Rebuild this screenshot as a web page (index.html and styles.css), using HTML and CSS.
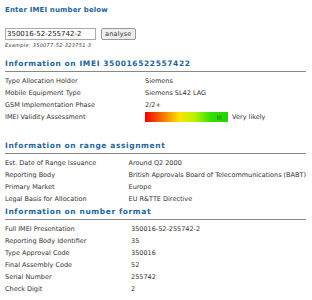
FILE: index.html
```html
<!DOCTYPE html>
<html lang="en">
  <head>
    <meta charset="UTF-8" />
    <title>IMEI</title>
    <link rel="stylesheet" href="styles.css">
  </head>
  <body>
    <form class="lookup">
      <h2 class="heading first">Enter IMEI number below</h2>
      <div class="lookup-row">
        <input type="text" class="lookup-input" value="350016-52-255742-2" />
        <button type="submit" class="lookup-btn">analyse</button>
      </div>
      <p class="example">Example: 350077-52-323751-3</p>
    </form>

    <h2 class="heading ruled">Information on IMEI 350016522557422</h2>
    <table class="info">
      <tr><td class="key">Type Allocation Holder</td><td>Siemens</td></tr>
      <tr><td class="key">Mobile Equipment Type</td><td>Siemens SL42 LAG</td></tr>
      <tr><td class="key">GSM Implementation Phase</td><td>2/2+</td></tr>
      <tr>
        <td class="key">IMEI Validity Assessment</td>
        <td>
          <span class="meter"><span class="meter-mark">)|(</span></span>
          <span class="meter-label">Very likely</span>
        </td>
      </tr>
      <tr><td class="key"></td><td></td></tr>
    </table>

    <h2 class="heading ruled">Information on range assignment</h2>
    <table class="info wide">
      <tr><td class="key">Est. Date of Range Issuance</td><td>Around Q2 2000</td></tr>
      <tr><td class="key">Reporting Body</td><td>British Approvals Board of Telecommunications (BABT)</td></tr>
      <tr><td class="key">Primary Market</td><td>Europe</td></tr>
      <tr><td class="key">Legal Basis for Allocation</td><td>EU R&amp;TTE Directive</td></tr>
    </table>

    <h2 class="heading ruled tight">Information on number format</h2>
    <table class="info wide">
      <tr><td class="key">Full IMEI Presentation</td><td>350016-52-255742-2</td></tr>
      <tr><td class="key">Reporting Body Identifier</td><td>35</td></tr>
      <tr><td class="key">Type Approval Code</td><td>350016</td></tr>
      <tr><td class="key">Final Assembly Code</td><td>52</td></tr>
      <tr><td class="key">Serial Number</td><td>255742</td></tr>
      <tr><td class="key">Check Digit</td><td>2</td></tr>
    </table>
  </body>
</html>
```
FILE: styles.css
```css
* {
  box-sizing: border-box;
}

body {
  margin: 0;
  padding: 0 6px 0 5px;
  background: #fff;
  color: #333;
  font-family: "DejaVu Sans", Verdana, sans-serif;
  font-size: 6.5px;
}

.lookup {
  height: 53px;
}

.heading {
  margin: 0;
  color: #22649a;
  font-size: 7.5px;
  font-weight: bold;
  letter-spacing: 0.6px;
  line-height: 10px;
}

.heading.first {
  padding-top: 5px;
  font-size: 7px;
  letter-spacing: 0.15px;
}

.heading.ruled {
  margin-top: 6px;
  padding-bottom: 2px;
  border-bottom: 1px solid #888;
}

.heading.ruled.tight {
  margin-top: 2px;
}

.lookup-row {
  display: flex;
  align-items: center;
  gap: 5px;
  margin-top: 13px;
}

.lookup-input {
  width: 91px;
  height: 12px;
  padding: 0 1px;
  border: 1px solid #aaa;
  font-family: "DejaVu Sans", Verdana, sans-serif;
  font-size: 7px;
  color: #222;
}

.lookup-btn {
  height: 12px;
  padding: 0 3px;
  border: 1px solid #999;
  border-radius: 2px;
  background: #eee;
  font-family: "DejaVu Sans", Verdana, sans-serif;
  font-size: 6.5px;
  color: #333;
  letter-spacing: 0.2px;
}

.example {
  margin: 2px 0 0;
  font-size: 5px;
  font-style: italic;
  color: #333;
  letter-spacing: 0.3px;
}

.info {
  border-collapse: collapse;
  margin-top: 3px;
}

.info td {
  padding: 0;
  height: 12px;
  white-space: nowrap;
}

.info .key {
  width: 140px;
}

.info.wide .key {
  width: 126px;
}

.meter {
  display: inline-block;
  vertical-align: middle;
  width: 83px;
  height: 10px;
  background: linear-gradient(to right, #f00000 0%, #f56d00 20%, #ffe400 42%, #b8f000 60%, #33e000 80%, #1ed600 100%);
  text-align: right;
  padding-right: 6px;
  font-size: 5px;
  line-height: 10px;
  color: #333;
}

.meter-label {
  vertical-align: middle;
  margin-left: 2px;
}
```
